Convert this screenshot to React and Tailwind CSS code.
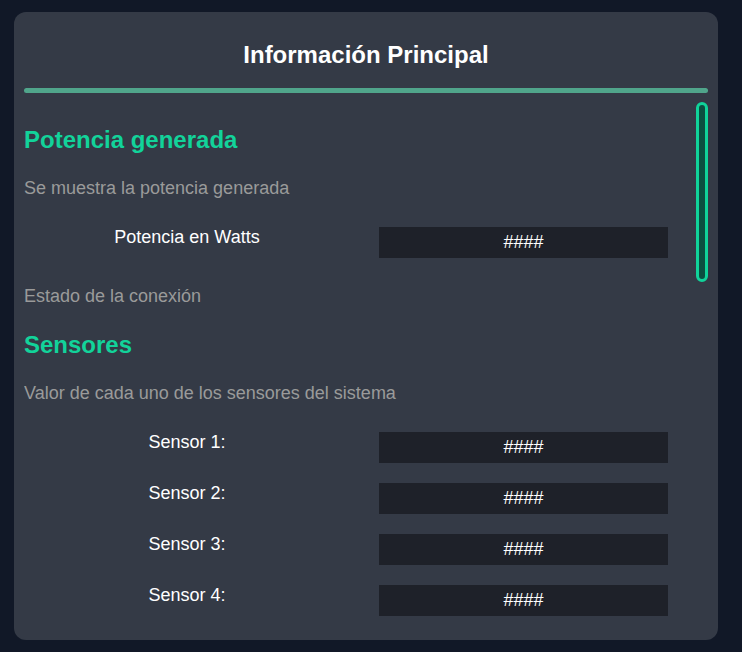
import React from 'react';

const sensores = ['Sensor 1:', 'Sensor 2:', 'Sensor 3:', 'Sensor 4:'];

const Fila = ({ label, valor = '####' }) => (
  <div className="flex items-start">
    <p className="w-[326px] text-center text-white leading-[24px]">{label}</p>
    <div className="ml-[29px] mt-[2px] w-[289px] h-[31px] bg-[#1e2129] flex items-center justify-center text-white">
      {valor}
    </div>
  </div>
);

const App = () => {
  return (
    <div className="min-h-screen bg-[#111827] pt-[12px] font-['Liberation_Sans',Arial,sans-serif] text-[18px]">
      <div className="ml-[14px] w-[704px] h-[628px] bg-[#343a46] rounded-xl px-[10px] pt-[29px] pb-[10px] flex flex-col">
        <h1 className="text-center text-white text-[24px] leading-[28px] font-bold">Información Principal</h1>
        <div className="mt-[19px] h-[5px] rounded-full bg-[#50a58b]" />
        <div className="relative mt-[8px] flex-1 min-h-0">
          <div className="h-full overflow-y-auto pr-[12px] [scrollbar-width:none]">
            <h2 className="mt-[25px] text-[24px] leading-[28px] font-bold text-[#12d39a]">Potencia generada</h2>
            <p className="mt-[22px] leading-[24px] text-[#9a9a9a]">Se muestra la potencia generada</p>
            <div className="mt-[25px]">
              <Fila label="Potencia en Watts" />
            </div>
            <p className="mt-[26px] leading-[24px] text-[#9a9a9a]">Estado de la conexión</p>

            <h2 className="mt-[23px] text-[24px] leading-[28px] font-bold text-[#12d39a]">Sensores</h2>
            <p className="mt-[22px] leading-[24px] text-[#9a9a9a]">Valor de cada uno de los sensores del sistema</p>
            <div className="mt-[25px] flex flex-col gap-[18px]">
              {sensores.map(s => (
                <Fila key={s} label={s} />
              ))}
            </div>
          </div>
          {/* barra de desplazamiento */}
          <div className="absolute right-0 top-[1px] w-[12px] h-[180px] rounded-full border-[3px] border-[#10d39a] bg-[#0b4f40]" />
        </div>
      </div>
    </div>
  );
};

export default App;
